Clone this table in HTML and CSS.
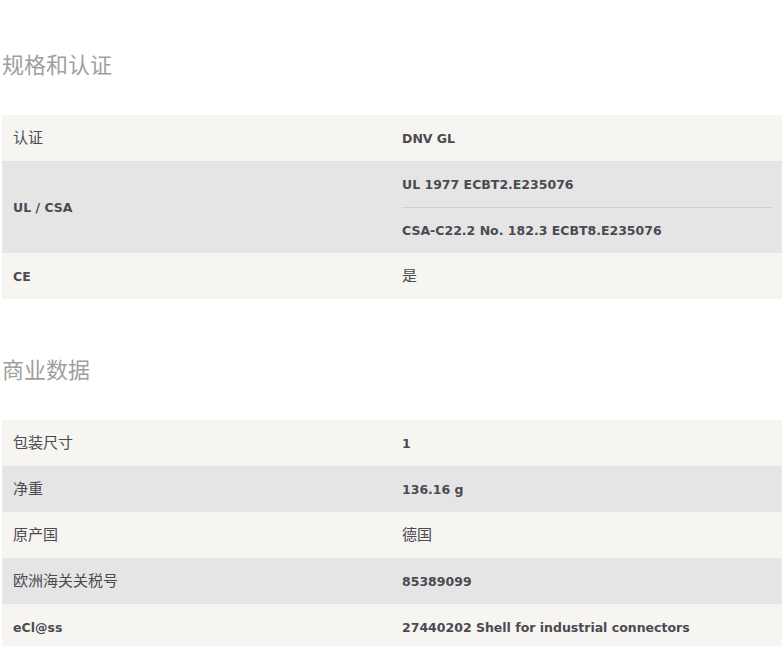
FILE: index.html
```html
<!DOCTYPE html>
<html lang="zh">
<head>
<meta charset="utf-8">
<link rel="stylesheet" href="styles.css">
</head>
<body>
<section class="section">
  <h2 class="heading">规格和认证</h2>
  <div class="table">
    <div class="row light">
      <div class="label zh">认证</div>
      <div class="value"><div class="item">DNV GL</div></div>
    </div>
    <div class="row dark">
      <div class="label">UL / CSA</div>
      <div class="value">
        <div class="item">UL 1977 ECBT2.E235076</div>
        <div class="item">CSA-C22.2 No. 182.3 ECBT8.E235076</div>
      </div>
    </div>
    <div class="row light">
      <div class="label">CE</div>
      <div class="value"><div class="item zh">是</div></div>
    </div>
  </div>
</section>
<section class="section">
  <h2 class="heading">商业数据</h2>
  <div class="table">
    <div class="row light">
      <div class="label zh">包装尺寸</div>
      <div class="value"><div class="item">1</div></div>
    </div>
    <div class="row dark">
      <div class="label zh">净重</div>
      <div class="value"><div class="item">136.16 g</div></div>
    </div>
    <div class="row light">
      <div class="label zh">原产国</div>
      <div class="value"><div class="item zh">德国</div></div>
    </div>
    <div class="row dark">
      <div class="label zh">欧洲海关关税号</div>
      <div class="value"><div class="item">85389099</div></div>
    </div>
    <div class="row light">
      <div class="label">eCl@ss</div>
      <div class="value"><div class="item">27440202 Shell for industrial connectors</div></div>
    </div>
  </div>
</section>
</body>
</html>
```
FILE: styles.css
```css
*, *::before, *::after {
  box-sizing: border-box;
}
html, body {
  margin: 0;
  padding: 0;
  background: #ffffff;
}
body {
  padding: 48px 0 0 2px;
  font-family: "DejaVu Sans", "Noto Sans CJK SC", sans-serif;
  color: #4b4a50;
}
.section {
  margin-bottom: 54px;
}
.heading {
  margin: 0 0 37px 0;
  font-size: 22px;
  line-height: 30px;
  font-weight: normal;
  color: #a09f9b;
  font-family: "Noto Sans CJK SC", sans-serif;
}
.table {
  display: flex;
  flex-direction: column;
}
.row {
  display: grid;
  grid-template-columns: 388px 1fr;
}
.light { background: #f6f5f2; }
.dark { background: #e5e5e5; }
.label {
  display: flex;
  align-items: center;
  padding: 0 11px;
  font-size: 12.5px;
  font-weight: bold;
}
.value {
  display: flex;
  flex-direction: column;
  padding: 0 10px 0 12px;
}
.item {
  height: 46px;
  display: flex;
  align-items: center;
  font-size: 12.5px;
  font-weight: bold;
}
.item + .item {
  border-top: 1px solid #cfcfcf;
}
.zh {
  font-family: "Noto Sans CJK SC", sans-serif;
  font-weight: normal;
  font-size: 15px;
  line-height: 18px;
  padding-bottom: 2px;
}
```
